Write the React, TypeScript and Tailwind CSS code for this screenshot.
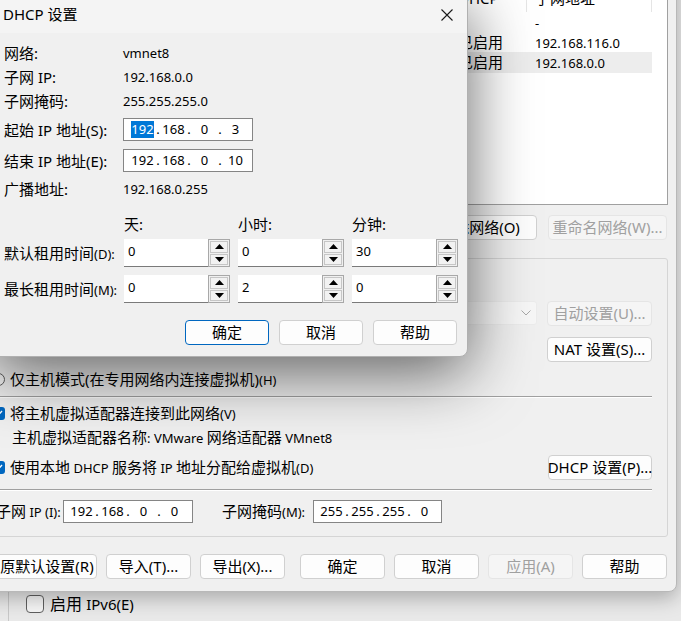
import React from 'react'

// Win11-ish dialog chrome, 125% scaling
const FONT = "font-['Noto_Sans','Noto_Sans_CJK_SC',sans-serif]"

type BtnProps = {
    children: React.ReactNode
    className?: string
    disabled?: boolean
    focused?: boolean
}

const Btn: React.FC<BtnProps> = ({ children, className = '', disabled = false, focused = false }) => (
    <div
        className={`h-[25px] shrink-0 flex items-center justify-center rounded-[4px] border text-[15px] leading-none whitespace-nowrap ${
            disabled
                ? 'bg-[#f5f5f5] border-[#e5e5e5] text-[#a0a0a0]'
                : focused
                ? 'bg-[#fdfdfd] border-[#0067c0] text-black'
                : 'bg-[#fdfdfd] border-[#d0d0d0] text-black'
        } ${className}`}
    >
        {children}
    </div>
)

const Small: React.FC<{ children: React.ReactNode }> = ({ children }) => (
    <span className="text-[13px]">{children}</span>
)

// IP address control: fixed slots for octets and dots
const IpField: React.FC<{ octets: string[]; selectFirst?: boolean; className?: string }> = ({
    octets,
    selectFirst = false,
    className = '',
}) => (
    <div className={`h-[23px] bg-white border border-[#858585] flex items-center text-[13px] leading-[17px] ${className}`}>
        {octets.map((o, i) => (
            <React.Fragment key={i}>
                {i > 0 && <span className="w-[6px] text-center">.</span>}
                <span className="w-[25px] flex justify-center">
                    <span className={i === 0 && selectFirst ? 'bg-[#0078d7] text-white' : ''}>{o}</span>
                </span>
            </React.Fragment>
        ))}
    </div>
)

const Triangle: React.FC<{ down?: boolean }> = ({ down = false }) => (
    <svg width="9" height="5" viewBox="0 0 9 5">
        <path d={down ? 'M0 0 L9 0 L4.5 5 Z' : 'M0 5 L9 5 L4.5 0 Z'} fill="#000" />
    </svg>
)

const Spinner: React.FC<{ value: string }> = ({ value }) => (
    <div className="flex w-[106px] h-[28px]">
        <div className="w-[84px] h-full bg-white border-b border-[#7a7a7a] pl-[4px] pt-[2px] text-[13px] leading-[20px]">
            {value}
        </div>
        <div className="w-[22px] h-full border border-[#a8a8a8] p-px flex flex-col gap-px bg-[#f0f0f0]">
            <div className="flex-1 border border-[#c6c6c6] bg-[#f2f2f2] flex items-center justify-center">
                <Triangle />
            </div>
            <div className="flex-1 border border-[#c6c6c6] bg-[#f2f2f2] flex items-center justify-center">
                <Triangle down />
            </div>
        </div>
    </div>
)

const Radio: React.FC = () => (
    <div className="w-[13px] h-[13px] shrink-0 rounded-full border border-[#5c5c5c] bg-[#f7f7f7]" />
)

const Check: React.FC = () => (
    <div className="w-[13px] h-[13px] shrink-0 rounded-[3px] bg-[#0067c0] flex items-center justify-center">
        <svg width="9" height="7" viewBox="0 0 9 7">
            <path d="M1 3.5 L3.5 6 L8 1" stroke="#fff" strokeWidth="1.4" fill="none" />
        </svg>
    </div>
)

const Separator: React.FC<{ className?: string }> = ({ className = '' }) => (
    <div className={`h-[2px] shrink-0 border-t border-[#a0a0a0] border-b border-b-white ${className}`} />
)

const LIST_COLS = 'grid grid-cols-[462px_82px_125px_1fr]'

// rows of the network list; the name columns sit under the dialog
const NETS = [
    { dhcp: '', subnet: '-' },
    { dhcp: '已启用', subnet: '192.168.116.0' },
    { dhcp: '已启用', subnet: '192.168.0.0', selected: true },
]

const Editor: React.FC = () => (
    <div className="absolute left-[-30px] top-[-40px] w-[707px] h-[632px] bg-[#f0f0f0] border border-[#b8b8b8] rounded-br-[8px] shadow-[0_6px_20px_rgba(0,0,0,0.28)] pl-[11px] pr-[8px] pt-[21px] flex flex-col text-[15px] leading-[20px]">
        {/* network list */}
        <div className="h-[223px] shrink-0 bg-white border border-[#a0a0a0] flex flex-col">
            <div className={`${LIST_COLS} h-[29px]`}>
                <div />
                <div className="flex items-center pl-[13px] border-r border-[#e5e5e5]">DHCP</div>
                <div className="flex items-center pl-[8px] border-r border-[#e5e5e5]">子网地址</div>
                <div />
            </div>
            {NETS.map((n, i) => (
                <div key={i} className={`${LIST_COLS} h-[20px]`}>
                    <div className={n.selected ? 'bg-[#ededed]' : ''} />
                    <div className={`pl-[13px] ${n.selected ? 'bg-[#ededed]' : ''}`}>{n.dhcp}</div>
                    <div className={`pl-[8px] ${n.selected ? 'bg-[#ededed]' : ''}`}>
                        <Small>{n.subnet}</Small>
                    </div>
                    <div />
                </div>
            ))}
        </div>

        <div className="mt-[10px] flex justify-end gap-[11px] pr-[1px]">
            <Btn className="w-[115px]">移除网络(O)</Btn>
            <Btn disabled className="w-[119px]">重命名网络(W)...</Btn>
        </div>

        {/* VMnet info group */}
        <div className="mt-[18px] h-[279px] shrink-0 border border-[#d5d5d5] rounded-[3px] pl-[9px] pr-[15px] flex flex-col">
            <div className="mt-[11px] h-[20px] flex items-center">
                <Radio />
            </div>
            <div className="mt-[11px] h-[24px] flex items-center">
                <div className="ml-[128px] flex-1 h-[24px] bg-[#f7f7f7] border border-[#ececec] rounded-[3px] flex items-center justify-end pr-[5px]">
                    <svg width="10" height="6" viewBox="0 0 10 6">
                        <path d="M0.5 0.5 L5 5 L9.5 0.5" stroke="#a8a8a8" fill="none" />
                    </svg>
                </div>
                <Btn disabled className="ml-[10px] w-[105px]">自动设置(U)...</Btn>
            </div>
            <div className="mt-[12px] h-[24px] flex items-center gap-[5px]">
                <Radio />
                <div className="flex-1" />
                <Btn className="w-[105px]">NAT 设置(S)...</Btn>
            </div>
            <div className="mt-[9px] h-[18px] flex items-center gap-[5px]">
                <Radio />
                <span className="whitespace-nowrap">
                    仅主机模式(在专用网络内连接虚拟机)<Small>(H)</Small>
                </span>
            </div>
            <Separator className="mt-[8px]" />
            <div className="mt-[6px] h-[18px] flex items-center gap-[5px]">
                <Check />
                <span className="whitespace-nowrap">
                    将主机虚拟适配器连接到此网络<Small>(V)</Small>
                </span>
            </div>
            <div className="mt-[6px] h-[18px] flex items-center pl-[20px]">
                <span className="whitespace-nowrap">
                    主机虚拟适配器名称<Small>:&nbsp;VMware&nbsp;</Small>网络适配器<Small>&nbsp;VMnet8</Small>
                </span>
            </div>
            <div className="mt-[9px] h-[24px] flex items-center gap-[5px]">
                <Check />
                <span className="flex-1 whitespace-nowrap">
                    使用本地<Small>&nbsp;DHCP&nbsp;</Small>服务将<Small>&nbsp;IP&nbsp;</Small>地址分配给虚拟机<Small>(D)</Small>
                </span>
                <Btn className="w-[104px]">DHCP 设置(P)...</Btn>
            </div>
            <Separator className="mt-[10px]" />
            <div className="mt-[9px] h-[23px] flex items-center whitespace-nowrap">
                <span className="ml-[4px] w-[62px]">
                    子网<Small>&nbsp;IP (I):</Small>
                </span>
                <IpField octets={['192', '168', '0', '0']} className="ml-[5px] w-[130px] pl-[5px]" />
                <span className="ml-[29px] w-[86px]">
                    子网掩码<Small>(M):</Small>
                </span>
                <IpField octets={['255', '255', '255', '0']} className="ml-[5px] w-[129px] pl-[5px]" />
            </div>
        </div>

        {/* bottom buttons */}
        <div className="mt-[17px] flex">
            <Btn className="w-[115px]">还原默认设置(R)</Btn>
            <Btn className="ml-[9px] w-[85px]">导入(T)...</Btn>
            <Btn className="ml-[9px] w-[85px]">导出(X)...</Btn>
            <Btn className="ml-[15px] w-[85px]">确定</Btn>
            <Btn className="ml-[9px] w-[85px]">取消</Btn>
            <Btn disabled className="ml-[9px] w-[85px]">应用(A)</Btn>
            <Btn className="ml-[9px] w-[85px]">帮助</Btn>
        </div>
    </div>
)

const InfoRow: React.FC<{ label: React.ReactNode; children: React.ReactNode; className?: string }> = ({
    label,
    children,
    className = '',
}) => (
    <div className={`flex items-center ${className}`}>
        <span className="w-[119px] shrink-0 whitespace-nowrap">{label}</span>
        {children}
    </div>
)

const DhcpDialog: React.FC = () => (
    <div className="absolute left-[-10px] top-[-6px] w-[478px] h-[363px] bg-[#f0f0f0] border border-[#b0b0b0] rounded-br-[8px] shadow-[0_16px_64px_rgba(0,0,0,0.6)] flex flex-col text-[15px] leading-[20px]">
        {/* title bar */}
        <div className="h-[38px] shrink-0 bg-[#f4f4f4] flex items-center justify-between pl-[12px]">
            <span>DHCP 设置</span>
            <div className="w-[40px] h-full flex items-center justify-center pt-[1px]">
                <svg width="12" height="12" viewBox="0 0 12 12">
                    <path d="M0.5 0.5 L11.5 11.5 M11.5 0.5 L0.5 11.5" stroke="#1a1a1a" strokeWidth="1.1" />
                </svg>
            </div>
        </div>

        <div className="flex flex-col pl-[13px] pt-[8px]">
            <InfoRow label="网络:" className="h-[24px]">
                <Small>vmnet8</Small>
            </InfoRow>
            <InfoRow label="子网 IP:" className="h-[24px]">
                <Small>192.168.0.0</Small>
            </InfoRow>
            <InfoRow label="子网掩码:" className="h-[24px]">
                <Small>255.255.255.0</Small>
            </InfoRow>
            <InfoRow label="起始 IP 地址(S):" className="mt-[5px] h-[23px]">
                <IpField octets={['192', '168', '0', '3']} selectFirst className="w-[130px] pl-[6px]" />
            </InfoRow>
            <InfoRow label="结束 IP 地址(E):" className="mt-[8px] h-[23px]">
                <IpField octets={['192', '168', '0', '10']} className="w-[130px] pl-[6px]" />
            </InfoRow>
            <InfoRow label="广播地址:" className="mt-[7px] h-[20px]">
                <Small>192.168.0.255</Small>
            </InfoRow>

            <div className="mt-[15px] h-[20px] flex pl-[120px]">
                <span className="w-[114px]">天:</span>
                <span className="w-[114px]">小时:</span>
                <span className="w-[114px]">分钟:</span>
            </div>
            <div className="mt-[5px] h-[28px] flex items-center">
                <span className="w-[120px] shrink-0 whitespace-nowrap">
                    默认租用时间<Small>(D):</Small>
                </span>
                <div className="flex gap-[8px]">
                    <Spinner value="0" />
                    <Spinner value="0" />
                    <Spinner value="30" />
                </div>
            </div>
            <div className="mt-[8px] h-[28px] flex items-center">
                <span className="w-[120px] shrink-0 whitespace-nowrap">
                    最长租用时间<Small>(M):</Small>
                </span>
                <div className="flex gap-[8px]">
                    <Spinner value="0" />
                    <Spinner value="2" />
                    <Spinner value="0" />
                </div>
            </div>

            <div className="mt-[17px] flex justify-end gap-[10px] pr-[10px]">
                <Btn focused className="w-[84px]">确定</Btn>
                <Btn className="w-[84px]">取消</Btn>
                <Btn className="w-[84px]">帮助</Btn>
            </div>
        </div>
    </div>
)

export default function App() {
    return (
        <div className={`relative w-[681px] h-[621px] overflow-hidden bg-[#e9e9e9] text-black ${FONT}`}>
            {/* window underneath */}
            <div className="absolute inset-0 pl-[8px]">
                <div className="h-full border-l border-[#c8c8c8] flex flex-col justify-end pb-[8px] pl-[17px]">
                    <div className="flex items-center gap-[6px] h-[18px]">
                        <div className="w-[18px] h-[18px] rounded-[4px] border border-[#5f5f5f] bg-[#f6f6f6]" />
                        <span className="text-[16px] leading-[18px] whitespace-nowrap">
                            启用 <span className="text-[15px]">IPv6(E)</span>
                        </span>
                    </div>
                </div>
            </div>
            <Editor />
            <DhcpDialog />
        </div>
    )
}
